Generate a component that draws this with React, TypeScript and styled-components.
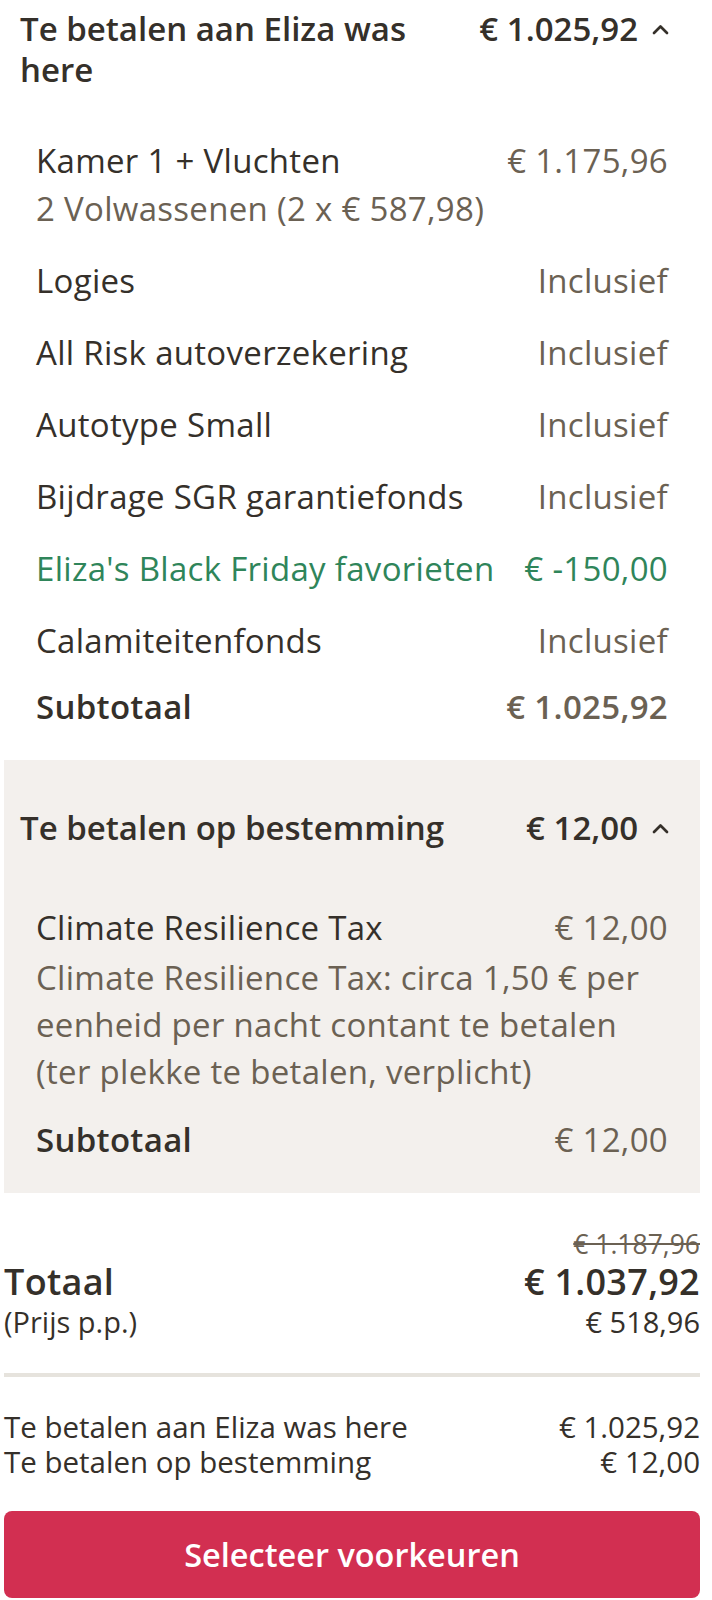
import styled, { createGlobalStyle } from "styled-components";

const GlobalStyle = createGlobalStyle`
    body {
        margin: 0;
        background: #ffffff;
        font-family: "Open Sans", "Liberation Sans", sans-serif;
        color: #35302a;
    }
`;

const Page = styled.div`
    padding: 8px 12px 0 4px;
`;

const Section = styled.section<{ $muted?: boolean; $top: number; $bottom: number }>`
    background: ${(p) => (p.$muted ? "#f3f0ed" : "transparent")};
    padding: ${(p) => p.$top}px 0 ${(p) => p.$bottom}px;
`;

const SectionHeader = styled.div`
    display: flex;
    justify-content: space-between;
    align-items: flex-start;
    gap: 40px;
    padding: 0 31px 0 16px;
    font-size: 33px;
    line-height: 41px;
    font-weight: 600;
`;

const HeaderTitle = styled.div`
    flex: 1;
`;

const HeaderPrice = styled.div`
    display: flex;
    align-items: center;
    gap: 14px;
    white-space: nowrap;
`;

const Chevron = styled.svg`
    width: 17px;
    height: 12px;
`;

const ItemList = styled.div<{ $gap: number }>`
    display: flex;
    flex-direction: column;
    gap: 25px;
    padding: 0 32px;
    margin-top: ${(p) => p.$gap}px;
`;

const Item = styled.div``;

const Row = styled.div<{ $discount?: boolean }>`
    display: flex;
    justify-content: space-between;
    gap: 16px;
    font-size: 33px;
    line-height: 47px;
    letter-spacing: 0.3px;
    color: ${(p) => (p.$discount ? "#2f855a" : "#35302a")};
`;

const Value = styled.span<{ $discount?: boolean; $bold?: boolean }>`
    color: ${(p) => (p.$discount ? "#2f855a" : "#6b6153")};
    font-weight: ${(p) => (p.$bold ? 600 : 400)};
    white-space: nowrap;
`;

const Note = styled.div<{ $offset: number }>`
    margin-top: ${(p) => p.$offset}px;
    font-size: 33px;
    line-height: 47px;
    letter-spacing: 0.3px;
    color: #6b6153;
`;

const SubtotalRow = styled(Row)<{ $offset: number }>`
    margin-top: ${(p) => p.$offset}px;
    font-weight: 600;
`;

const Totals = styled.div`
    padding: 34px 0 0;
`;

const OldPrice = styled.div`
    text-align: right;
    font-size: 26.5px;
    line-height: 34px;
    color: #6b6153;
    text-decoration: line-through;
`;

const TotalRow = styled.div`
    display: flex;
    justify-content: space-between;
    font-size: 36px;
    line-height: 42px;
    letter-spacing: 0.3px;
    font-weight: 600;
`;

const PerPerson = styled.div`
    display: flex;
    justify-content: space-between;
    font-size: 29px;
    line-height: 37px;
`;

const Divider = styled.hr`
    border: none;
    height: 4px;
    background: #e6e3dd;
    margin: 33px 0 32px;
`;

const Summary = styled.div`
    font-size: 29.5px;
    line-height: 35px;
`;

const SummaryRow = styled.div`
    display: flex;
    justify-content: space-between;
`;

const PrimaryButton = styled.button`
    display: block;
    width: 100%;
    height: 87px;
    margin-top: 32px;
    border: none;
    border-radius: 8px;
    background: #d22f51;
    color: #ffffff;
    font-family: inherit;
    font-size: 32.5px;
    font-weight: 600;
    cursor: pointer;
`;

function ChevronUp() {
    return (
        <Chevron viewBox="0 0 17 12" fill="none">
            <polyline points="2,10 8.5,3.5 15,10" stroke="#35302a" strokeWidth="2.7" strokeLinecap="round" strokeLinejoin="round" />
        </Chevron>
    );
}

const lines = [
    { label: "Logies", value: "Inclusief" },
    { label: "All Risk autoverzekering", value: "Inclusief" },
    { label: "Autotype Small", value: "Inclusief" },
    { label: "Bijdrage SGR garantiefonds", value: "Inclusief" },
    { label: "Eliza's Black Friday favorieten", value: "€ -150,00", discount: true },
    { label: "Calamiteitenfonds", value: "Inclusief" },
];

export default function App() {
    return (
        <Page>
            <GlobalStyle />
            <Section $top={0} $bottom={30}>
                <SectionHeader>
                    <HeaderTitle>Te betalen aan Eliza was here</HeaderTitle>
                    <HeaderPrice>€ 1.025,92 <ChevronUp /></HeaderPrice>
                </SectionHeader>
                <ItemList $gap={47}>
                    <Item>
                        <Row>
                            <span>Kamer 1 + Vluchten</span>
                            <Value>€ 1.175,96</Value>
                        </Row>
                        <Note $offset={1}>2 Volwassenen (2 x € 587,98)</Note>
                    </Item>
                    {lines.map((l) => (
                        <Row key={l.label} $discount={l.discount}>
                            <span>{l.label}</span>
                            <Value $discount={l.discount}>{l.value}</Value>
                        </Row>
                    ))}
                    <SubtotalRow $offset={-6}>
                        <span>Subtotaal</span>
                        <Value $bold>€ 1.025,92</Value>
                    </SubtotalRow>
                </ItemList>
            </Section>

            <Section $muted $top={47} $bottom={30}>
                <SectionHeader>
                    <HeaderTitle>Te betalen op bestemming</HeaderTitle>
                    <HeaderPrice>€ 12,00 <ChevronUp /></HeaderPrice>
                </SectionHeader>
                <ItemList $gap={56}>
                    <Item>
                        <Row>
                            <span>Climate Resilience Tax</span>
                            <Value>€ 12,00</Value>
                        </Row>
                        <Note $offset={3}>
                            Climate Resilience Tax: circa 1,50 € per eenheid per nacht contant te betalen (ter plekke te betalen, verplicht)
                        </Note>
                    </Item>
                    <SubtotalRow $offset={-4}>
                        <span>Subtotaal</span>
                        <Value>€ 12,00</Value>
                    </SubtotalRow>
                </ItemList>
            </Section>

            <Totals>
                <OldPrice>€ 1.187,96</OldPrice>
                <TotalRow>
                    <span>Totaal</span>
                    <span>€ 1.037,92</span>
                </TotalRow>
                <PerPerson>
                    <span>(Prijs p.p.)</span>
                    <span>€ 518,96</span>
                </PerPerson>
            </Totals>

            <Divider />

            <Summary>
                <SummaryRow>
                    <span>Te betalen aan Eliza was here</span>
                    <span>€ 1.025,92</span>
                </SummaryRow>
                <SummaryRow>
                    <span>Te betalen op bestemming</span>
                    <span>€ 12,00</span>
                </SummaryRow>
            </Summary>

            <PrimaryButton>Selecteer voorkeuren</PrimaryButton>
        </Page>
    );
}
